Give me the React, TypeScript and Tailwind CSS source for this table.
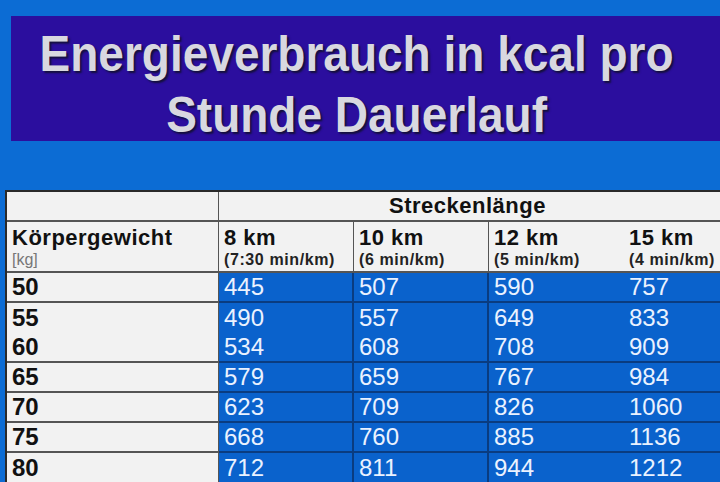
const rows = [
  { kg: "50", v: ["445", "507", "590", "757"], line: true },
  { kg: "55", v: ["490", "557", "649", "833"], line: false },
  { kg: "60", v: ["534", "608", "708", "909"], line: true },
  { kg: "65", v: ["579", "659", "767", "984"], line: true },
  { kg: "70", v: ["623", "709", "826", "1060"], line: true },
  { kg: "75", v: ["668", "760", "885", "1136"], line: true },
  { kg: "80", v: ["712", "811", "944", "1212"], line: false },
];

const cols = [
  { km: "8 km", pace: "(7:30 min/km)" },
  { km: "10 km", pace: "(6 min/km)" },
  { km: "12 km", pace: "(5 min/km)" },
  { km: "15 km", pace: "(4 min/km)" },
];

const grid = "grid grid-cols-[212px_135px_135px_135px_1fr]";

export default function App() {
  return (
    <div
      className="w-[720px] h-[482px] overflow-hidden bg-[#0c6cd4] pt-[16px]"
      style={{ fontFamily: '"Liberation Sans", Arial, sans-serif' }}
    >
      {/* title */}
      <div className="ml-[11px] h-[125px] bg-[#2b0e9e] pt-[8px] pr-[18px] flex flex-col items-center">
        <div className="text-[50px] leading-[61px] font-bold text-[#d8d8e0] whitespace-nowrap scale-x-[0.92] text-center [text-shadow:2px_2px_2px_#14103c]">
          <div>Energieverbrauch in kcal pro</div>
          <div>Stunde Dauerlauf</div>
        </div>
      </div>

      {/* table */}
      <div className="mt-[49px] ml-[5px] border-t-2 border-l-2 border-[#2a2a2a] bg-[#f2f2f2]">
        <div className={`${grid} h-[30px] border-b-2 border-[#555]`}>
          <div className="border-r border-[#555]" />
          <div className="col-span-4 flex items-center justify-center pr-[4px] text-[22px] leading-[26px] font-bold tracking-[0.5px] text-[#111]">
            Streckenlänge
          </div>
        </div>

        <div className={`${grid} h-[51px] border-b-2 border-[#555]`}>
          <div className="border-r border-[#555] pl-[5px] pt-[3px] flex flex-col">
            <span className="text-[22px] leading-[26px] font-bold tracking-[0.5px] text-[#111]">Körpergewicht</span>
            <span className="text-[16px] leading-[18px] text-[#777]">[kg]</span>
          </div>
          {cols.map((c, i) => (
            <div
              key={c.km}
              className={`pl-[5px] pt-[3px] flex flex-col ${i < 2 ? "border-r border-[#555]" : ""}`}
            >
              <span className="text-[22px] leading-[26px] font-bold tracking-[0.5px] text-[#111]">{c.km}</span>
              <span className="text-[16px] leading-[18px] font-bold tracking-[0.6px] text-[#222]">{c.pace}</span>
            </div>
          ))}
        </div>

        {rows.map((r) => (
          <div key={r.kg} className={`${grid} h-[30px]`}>
            <div
              className={`pl-[5px] flex items-center text-[24px] leading-[26px] font-bold text-[#111] border-r border-[#555] ${
                r.line ? "border-b-2 border-b-[#555]" : ""
              }`}
            >
              {r.kg}
            </div>
            {r.v.map((v, i) => (
              <div
                key={i}
                className={`flex items-center pl-[5px] bg-[#0a62cc] text-[24px] leading-[26px] text-[#eaf2ff] ${
                  i < 2 ? "border-r-2 border-r-[#0a3c80]" : ""
                } ${r.line ? "border-b-2 border-b-[#0a3c80]" : ""}`}
              >
                {v}
              </div>
            ))}
          </div>
        ))}
      </div>
    </div>
  );
}
